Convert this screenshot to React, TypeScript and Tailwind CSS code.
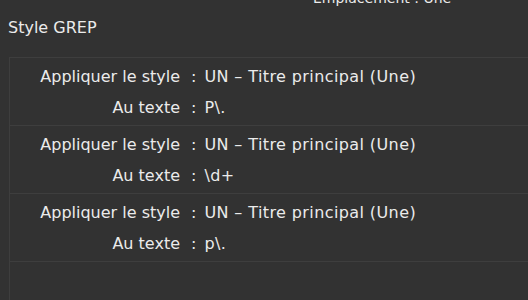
const rules = [
  { style: "UN – Titre principal (Une)", text: "P\\." },
  { style: "UN – Titre principal (Une)", text: "\\d+" },
  { style: "UN – Titre principal (Une)", text: "p\\." },
];

function Field({ label, value }: { label: string; value: string }) {
  return (
    <div className="flex h-[31px] items-center whitespace-pre">
      <span className="w-[170px] text-right">{label}</span>
      <span className="ml-[11px]">:</span>
      <span className="ml-[8px] tracking-[0.4px]">{value}</span>
    </div>
  );
}

export default function App() {
  return (
    <div className="h-[300px] w-[528px] overflow-hidden bg-[#323232] font-['DejaVu_Sans',sans-serif] text-[16px] text-[#ebebeb]">
      <div className="-mt-[10px] h-[17px] pl-[313px] text-[14px] leading-[17px]">Emplacement : Une</div>
      <div className="pl-2 pt-[11px] leading-[20px]">Style GREP</div>
      <div className="ml-[9px] mt-[19px] h-[300px] border-l border-t border-[#3e3e3e]">
        {rules.map((r, i) => (
          <div key={i} className="flex h-[68px] flex-col justify-center pt-[2px] border-b border-[#3e3e3e]">
            <Field label="Appliquer le style" value={r.style} />
            <Field label="Au texte" value={r.text} />
          </div>
        ))}
      </div>
    </div>
  );
}
